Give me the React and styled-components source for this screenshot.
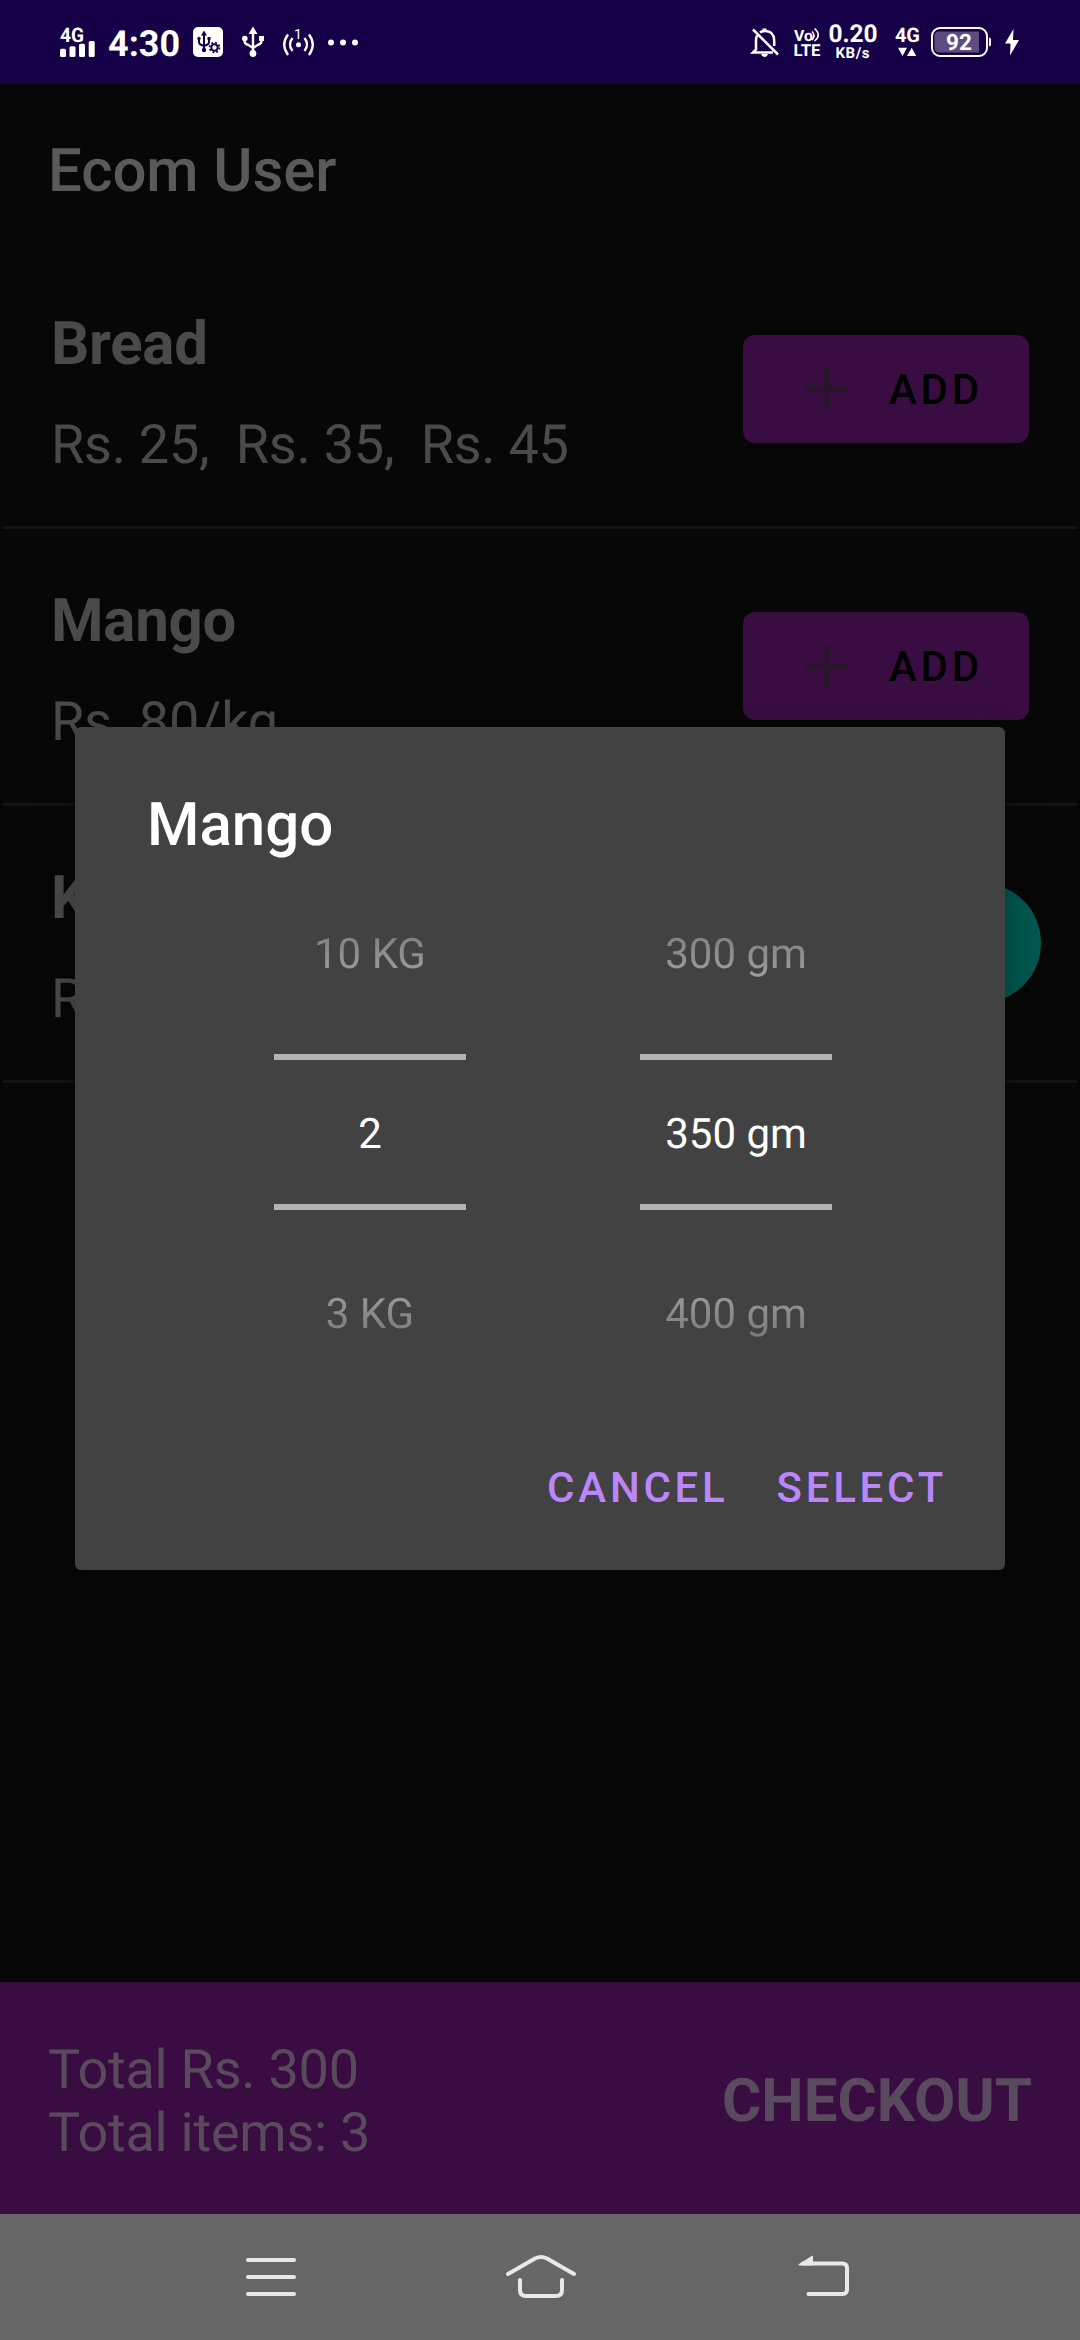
import React from "react";
import styled, { createGlobalStyle } from "styled-components";

const GlobalStyle = createGlobalStyle`
  * { box-sizing: border-box; }
  body { margin: 0; background: #070707; text-rendering: geometricPrecision; }
`;

const Screen = styled.div`
  position: relative;
  width: 1080px;
  height: 2340px;
  display: flex;
  flex-direction: column;
  overflow: hidden;
  background: #070707;
  font-family: Roboto, sans-serif;
`;

/* Status bar */
const StatusBar = styled.header`
  height: 84px;
  flex: none;
  display: flex;
  justify-content: space-between;
  padding: 0 61px 0 60px;
  background: #160048;
  color: #fff;
`;
const StatusGroup = styled.div`
  display: flex;
  align-items: center;
`;
const Glyph = styled.svg`
  flex: none;
  display: block;
  width: ${(p) => p.$w}px;
  height: 84px;
  margin-left: ${(p) => p.$gap || 0}px;
  overflow: visible;
  font-family: Roboto, sans-serif;
  font-weight: 700;
  fill: #fff;
`;
const Clock = styled.time`
  width: 72px;
  margin-left: 13px;
  font-size: 36px;
  line-height: 42px;
  font-weight: 700;
  padding-top: 3px;
  white-space: nowrap;
`;

/* App content */
const AppBar = styled.div`
  height: 168px;
  flex: none;
  display: flex;
  align-items: center;
  padding: 5px 48px 0;
  color: #5a5a5a;
  font-size: 60px;
  font-weight: 500;
  letter-spacing: -0.12px;
`;
const List = styled.main`
  flex: 1;
  padding: 0 3px;
`;
const Row = styled.section`
  height: 277px;
  display: flex;
  justify-content: space-between;
  align-items: center;
  padding: 0 ${(p) => (p.$round ? 36 : 48)}px 0 48px;
  border-bottom: 3px solid #131313;
  color: #4a4a4a;
`;
const RowText = styled.div`
  display: flex;
  flex-direction: column;
  gap: 35px;
  padding-top: 8px;
`;
const ItemName = styled.h2`
  margin: 0;
  font-size: 60px;
  line-height: 70px;
  font-weight: 700;
  letter-spacing: -0.25px;
`;
const ItemPrice = styled.p`
  margin: 0;
  font-size: 54px;
  line-height: 63px;
  letter-spacing: -0.23px;
  white-space: pre;
`;
const AddButton = styled.button`
  width: 286px;
  height: 108px;
  display: flex;
  align-items: center;
  padding: 0 0 0 63px;
  gap: 41px;
  border: 0;
  border-radius: 12px;
  background: #390d41;
  color: #000;
  font: 500 42px/50px Roboto, sans-serif;
  letter-spacing: 3.75px;
`;
const AddLabel = styled.span`
  padding-top: 2px;
`;
const PlusIcon = styled.svg`
  width: 42px;
  height: 42px;
  margin-top: -1px;
  fill: #28142b;
`;
const RoundButton = styled.button`
  width: 120px;
  height: 120px;
  border: 0;
  border-radius: 50%;
  background: #01574f;
`;

const Footer = styled.footer`
  height: 232px;
  flex: none;
  display: flex;
  justify-content: space-between;
  align-items: center;
  padding: 5px 48px 0;
  background: #390d41;
  color: #5a4a5d;
`;
const Totals = styled.div`
  padding-top: 2px;
  font-size: 54px;
  line-height: 63px;
  letter-spacing: -0.23px;
`;
const Checkout = styled.div`
  font-size: 60px;
  line-height: 70px;
  font-weight: 700;
`;

const NavBar = styled.nav`
  height: 126px;
  flex: none;
  display: flex;
  align-items: center;
  padding-left: 245px;
  background: #666;
`;
const NavIcon = styled.svg`
  flex: none;
  width: ${(p) => p.$w}px;
  height: 50px;
  margin-right: ${(p) => p.$after || 0}px;
  fill: none;
  stroke: #e8e8e8;
  stroke-width: 4;
  stroke-linecap: round;
  stroke-linejoin: round;
`;

/* Dialog */
const Dialog = styled.div`
  position: absolute;
  left: 75px;
  top: 727px;
  width: 930px;
  height: 843px;
  display: flex;
  flex-direction: column;
  border-radius: 6px;
  background: #424242;
  color: #fff;
  box-shadow: 0 12px 36px rgba(0, 0, 0, 0.3);
`;
const DialogTitle = styled.h1`
  margin: 0;
  padding: 63px 72px 0;
  height: 135px;
  font-size: 60px;
  line-height: 70px;
  font-weight: 500;
`;
const Pickers = styled.div`
  display: flex;
  gap: 174px;
  padding-left: 199px;
`;
const Picker = styled.div`
  width: 192px;
  text-align: center;
  font-size: 42px;
  line-height: 50px;
`;
const Value = styled.div`
  height: 192px;
  padding-top: ${(p) => (p.$below ? 80 : 68)}px;
  background: linear-gradient(${(p) => (p.$below ? "to bottom" : "to top")}, rgba(255, 255, 255, 0.8), rgba(255, 255, 255, 0.04));
  background-clip: text;
  -webkit-background-clip: text;
  color: transparent;
`;
const Selected = styled.div`
  height: 156px;
  padding-top: 50px;
  border: solid #b3b3b3;
  border-width: 6px 0;
`;
const Actions = styled.div`
  display: flex;
  justify-content: flex-end;
  gap: 48px;
  padding: 61px 58px 0 0;
`;
const Action = styled.button`
  padding: 0;
  border: 0;
  background: none;
  color: #bb86fc;
  font: 500 42px/50px Roboto, sans-serif;
  letter-spacing: 3.75px;
`;

const items = [
  { name: "Bread", price: "Rs. 25,  Rs. 35,  Rs. 45" },
  { name: "Mango", price: "Rs. 80/kg" },
  { name: "K", price: "R", round: true },
];
const pickers = [
  ["10 KG", "2", "3 KG"],
  ["300 gm", "350 gm", "400 gm"],
];

function UsbTrident() {
  return (
    <g>
      <path d="M11 31V54M2.5 38v3q0 3 4 4l4.500 3M19.500 37v4q0 3-4 4l-4.500 3" fill="none" stroke="#fff" strokeWidth="2.400" />
      <path d="M11 26.500L15.500 34H6.500Z" />
      <circle cx="11" cy="53.500" r="3.400" />
      <circle cx="2.800" cy="38.500" r="2.800" />
      <rect x="17" y="36" width="5" height="5" />
    </g>
  );
}

function Status() {
  return (
    <StatusBar>
      <StatusGroup>
        <Glyph $w={35} viewBox="0 0 35 84">
          <text x="0" y="41.500" fontSize="20" textLength="24" lengthAdjust="spacingAndGlyphs">4G</text>
          <rect x="0" y="48.700" width="6" height="8.300" rx="1.500" />
          <rect x="9.500" y="46.300" width="6" height="10.700" rx="1.500" />
          <rect x="19" y="43.700" width="6" height="13.300" rx="1.500" />
          <rect x="28.700" y="41" width="6" height="16" rx="1.500" />
        </Glyph>
        <Clock>4:30</Clock>
        <Glyph $w={30} $gap={13} viewBox="0 0 30 84">
          <rect y="27" width="30" height="30" rx="5" />
          <g fill="#160048" stroke="#160048">
            <path d="M11 34v16M6 39v3q0 2 2.500 3l2.500 1M16 39v3q0 2-2.500 3l-2.500 1" fill="none" strokeWidth="2" />
            <path d="M11 30.500l3 5H8Z" stroke="none" />
            <circle cx="11" cy="50" r="2.200" stroke="none" />
            <circle cx="6" cy="38.500" r="1.700" stroke="none" />
            <rect x="14.500" y="37" width="3" height="3" stroke="none" />
            <circle cx="21.500" cy="47.500" r="5.300" fill="#fff" stroke="none" />
            <circle cx="21.500" cy="47.500" r="3.200" fill="none" strokeWidth="2" />
            <circle cx="21.500" cy="47.500" r="4.900" fill="none" strokeWidth="1.800" strokeDasharray="1.925 1.925" />
          </g>
        </Glyph>
        <Glyph $w={22} $gap={19} viewBox="0 0 22 84"><UsbTrident /></Glyph>
        <Glyph $w={31} $gap={18.500} viewBox="0 0 31 84">
          <g fill="none" stroke="#fff" strokeWidth="2.400">
            <path d="M5 34.500q-7.500 10 0 20.500M9.500 38q-5 6.500 0 13M26 34.500q7.500 10 0 20.500M21.500 38q5 6.500 0 13" />
          </g>
          <circle cx="15.500" cy="44.700" r="2.500" />
          <text x="11" y="39" fontSize="14" fontWeight="400">1</text>
        </Glyph>
        <Glyph $w={30} $gap={14.500} viewBox="0 0 30 84">
          <circle cx="3" cy="42.500" r="3" />
          <circle cx="15" cy="42.500" r="3" />
          <circle cx="27" cy="42.500" r="3" />
        </Glyph>
      </StatusGroup>
      <StatusGroup>
        <Glyph $w={27} viewBox="0 0 27 84">
          <g fill="none" stroke="#fff" strokeWidth="2.500">
            <path d="M1 29.500L26 54.500" />
            <path d="M5 35.500q-1 2-1 5v9l-3 3h20" />
            <path d="M8 32.500q2-1.500 5-1.500q9 0 9.200 9.500v5.500" />
          </g>
          <path d="M10.500 28.500h4v3h-4ZM9 54h7q-1 3-3.500 3T9 54Z" />
        </Glyph>
        <Glyph $w={26} $gap={15.500} viewBox="0 0 26 84">
          <text x="0" y="41" fontSize="15.500" textLength="19" lengthAdjust="spacingAndGlyphs">Vo</text>
          <path d="M18 31.500q4 4 0 8.500M20.500 28.500q7.500 6.500 0 12.500" fill="none" stroke="#fff" strokeWidth="1.600" />
          <text x="-.5" y="55.500" fontSize="16.500" textLength="27" lengthAdjust="spacingAndGlyphs">LTE</text>
        </Glyph>
        <Glyph $w={48} $gap={8.500} viewBox="0 0 48 84">
          <text x="24" y="42" fontSize="24.500" textAnchor="middle" textLength="49">0.20</text>
          <text x="23.500" y="58" fontSize="15" textAnchor="middle" textLength="34">KB/s</text>
        </Glyph>
        <Glyph $w={25} $gap={18.500} viewBox="0 0 25 84">
          <text x="0" y="42" fontSize="20" textLength="25">4G</text>
          <path d="M3 47.700h9L7.500 56ZM12 56h9.300L16.700 47.700Z" />
        </Glyph>
        <Glyph $w={61} $gap={10} viewBox="0 0 61 84">
          <rect x="2" y="28" width="55" height="28" rx="8" fill="none" stroke="#fff" strokeWidth="2" />
          <path d="M9.500 31.500H49V52.500H9.500q-5 0-5-5V36.500q0-5 5-5Z" fill="#5c4d80" />
          <path d="M59 37.500q2 0 2 2v5q0 2-2 2Z" />
          <text x="29" y="50" fontSize="22.500" textAnchor="middle">92</text>
        </Glyph>
        <Glyph $w={14} $gap={14} viewBox="0 0 14 84">
          <path d="M8.500 29L0 43.500h5.500L5 55.500L14 40H8Z" />
        </Glyph>
      </StatusGroup>
    </StatusBar>
  );
}

export default function App() {
  return (
    <Screen>
      <GlobalStyle />
      <Status />
      <AppBar>Ecom User</AppBar>
      <List>
        {items.map((it) => (
          <Row key={it.name} $round={it.round}>
            <RowText>
              <ItemName>{it.name}</ItemName>
              <ItemPrice>{it.price}</ItemPrice>
            </RowText>
            {it.round ? (
              <RoundButton />
            ) : (
              <AddButton>
                <PlusIcon viewBox="0 0 42 42"><path d="M18 0h6v18h18v6H24v18h-6V24H0v-6h18Z" /></PlusIcon>
                <AddLabel>ADD</AddLabel>
              </AddButton>
            )}
          </Row>
        ))}
      </List>
      <Footer>
        <Totals>
          <div>Total Rs. 300</div>
          <div>Total items: 3</div>
        </Totals>
        <Checkout>CHECKOUT</Checkout>
      </Footer>
      <NavBar>
        <NavIcon $w={52} $after={207} viewBox="0 0 52 50">
          <path d="M3 8h46M3 25h46M3 42h46" />
        </NavIcon>
        <NavIcon $w={74} $after={219} viewBox="0 0 74 50">
          <path d="M4 22L31 6.500Q37 3.500 43 6.500L70 22" />
          <path d="M16 28v10q0 6 6 6h30q6 0 6-6V28" />
        </NavIcon>
        <NavIcon $w={54} viewBox="0 0 54 50">
          <path d="M6 11.500H45.500q4.500 0 4.500 4.500V37.500q0 4.500-4.500 4.500H11.500" />
          <path d="M2 12.500L15.500 4V13H3Z" fill="#e8e8e8" strokeWidth="1" />
        </NavIcon>
      </NavBar>
      <Dialog role="dialog">
        <DialogTitle>Mango</DialogTitle>
        <Pickers>
          {pickers.map(([above, current, below]) => (
            <Picker key={above}>
              <Value>{above}</Value>
              <Selected>{current}</Selected>
              <Value $below>{below}</Value>
            </Picker>
          ))}
        </Pickers>
        <Actions>
          <Action>CANCEL</Action>
          <Action>SELECT</Action>
        </Actions>
      </Dialog>
    </Screen>
  );
}
